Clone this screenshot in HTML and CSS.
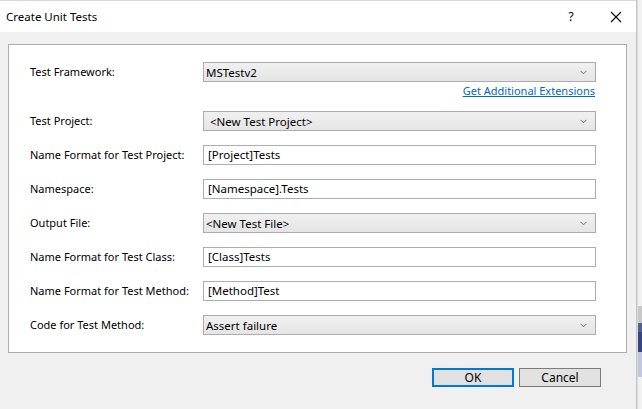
FILE: index.html
```html
<!DOCTYPE html>
<html lang="en">
<head>
  <meta charset="UTF-8" />
  <title>Create Unit Tests</title>
  <link rel="stylesheet" href="styles.css">
</head>
<body>
  <div class="screen">
    <div class="dialog">
      <div class="titlebar">
        <span class="title">Create Unit Tests</span>
        <span class="help">?</span>
        <span class="close">
          <svg width="12" height="12" viewBox="0 0 12 12"><path d="M1 1 L11 11 M11 1 L1 11" stroke="#000" stroke-width="1.1" fill="none"/></svg>
        </span>
      </div>
      <div class="content">
        <div class="panel">
          <div class="row first">
            <label class="label">Test Framework:</label>
            <div class="field">
              <div class="select"><span>MSTestv2</span><svg class="chev" width="7" height="5" viewBox="0 0 7 5"><path d="M0.5 0.8 L3.5 3.8 L6.5 0.8" stroke="#707070" stroke-width="1" fill="none"/></svg></div>
              <a class="link" href="#">Get Additional Extensions</a>
            </div>
          </div>
          <div class="row">
            <label class="label">Test Project:</label>
            <div class="field">
              <div class="select indent"><span>&lt;New Test Project&gt;</span><svg class="chev" width="7" height="5" viewBox="0 0 7 5"><path d="M0.5 0.8 L3.5 3.8 L6.5 0.8" stroke="#707070" stroke-width="1" fill="none"/></svg></div>
            </div>
          </div>
          <div class="row">
            <label class="label">Name Format for Test Project:</label>
            <div class="field"><div class="input">[Project]Tests</div></div>
          </div>
          <div class="row">
            <label class="label">Namespace:</label>
            <div class="field"><div class="input">[Namespace].Tests</div></div>
          </div>
          <div class="row">
            <label class="label">Output File:</label>
            <div class="field">
              <div class="select"><span>&lt;New Test File&gt;</span><svg class="chev" width="7" height="5" viewBox="0 0 7 5"><path d="M0.5 0.8 L3.5 3.8 L6.5 0.8" stroke="#707070" stroke-width="1" fill="none"/></svg></div>
            </div>
          </div>
          <div class="row">
            <label class="label">Name Format for Test Class:</label>
            <div class="field"><div class="input">[Class]Tests</div></div>
          </div>
          <div class="row">
            <label class="label">Name Format for Test Method:</label>
            <div class="field"><div class="input">[Method]Test</div></div>
          </div>
          <div class="row last">
            <label class="label">Code for Test Method:</label>
            <div class="field">
              <div class="select"><span>Assert failure</span><svg class="chev" width="7" height="5" viewBox="0 0 7 5"><path d="M0.5 0.8 L3.5 3.8 L6.5 0.8" stroke="#707070" stroke-width="1" fill="none"/></svg></div>
            </div>
          </div>
        </div>
        <div class="buttons">
          <button class="btn default">OK</button>
          <button class="btn">Cancel</button>
        </div>
      </div>
    </div>
    <div class="behind">
      <div class="b-light"></div>
      <div class="b-scroll"></div>
      <div class="b-blue1"></div>
      <div class="b-blue2"></div>
      <div class="b-lav"></div>
      <div class="b-rest"></div>
    </div>
  </div>
</body>
</html>
```

FILE: styles.css
```css
body {
  margin: 0;
  background: #f0f0f0;
  font-family: "Noto Sans", "Open Sans", sans-serif;
  font-size: 11px;
  color: #000;
}

.screen {
  display: flex;
  width: 642px;
  height: 409px;
  overflow: hidden;
}

.dialog {
  width: 636px;
  height: 409px;
  border-right: 1px solid #c4c4c4;
  background: #f0f0f0;
  display: flex;
  flex-direction: column;
}

.titlebar {
  height: 32px;
  background: #fff;
  border-top: 1px solid #d8d8d8;
  box-sizing: border-box;
  display: flex;
  align-items: center;
  padding-left: 6px;
  font-size: 12px;
}

.title {
  flex: 1;
  font-size: 11.5px;
}

.help {
  width: 40px;
  text-align: center;
  margin-right: 7px;
}

.close {
  width: 36px;
  display: flex;
  justify-content: center;
  margin-right: 2px;
}

.content {
  padding: 12px 9px 0 8px;
}

.panel {
  background: #fff;
  border: 1px solid #adadad;
  padding: 17px 30px 17px 21px;
}

.row {
  display: flex;
  align-items: flex-start;
  margin-bottom: 14px;
}

.row.first {
  margin-bottom: 13px;
}

.row.last {
  margin-bottom: 0;
}

.label {
  width: 173px;
  height: 20px;
  line-height: 20px;
  white-space: nowrap;
}

.field {
  flex: 1;
  display: flex;
  flex-direction: column;
  font-size: 11.5px;
}

.select {
  height: 20px;
  box-sizing: border-box;
  border: 1px solid #acacac;
  background: linear-gradient(#f0f0f0, #e5e5e5);
  display: flex;
  align-items: center;
  justify-content: space-between;
  padding: 0 8px 0 2px;
}

.select.indent {
  padding-left: 6px;
}

.input {
  height: 20px;
  box-sizing: border-box;
  border: 1px solid #abadb3;
  background: #fff;
  line-height: 18px;
  padding-left: 4px;
}

.link {
  align-self: flex-end;
  margin-top: 1px;
  margin-right: 1px;
  line-height: 15px;
  font-size: 11px;
  color: #0066cc;
  text-decoration: underline;
}

.buttons {
  display: flex;
  justify-content: flex-end;
  gap: 5px;
  margin-top: 15px;
  padding-right: 26px;
}

.btn {
  width: 82px;
  height: 19px;
  padding: 0;
  border: 1px solid #7a7a7a;
  background: #e1e1e1;
  font-family: inherit;
  font-size: 12px;
  line-height: 16px;
}

.btn.default {
  border: 1px solid #0078d7;
  box-shadow: inset 0 0 0 1px #0078d7;
}

.behind {
  flex: 1;
  display: flex;
  flex-direction: column;
  border-left: 1px solid #dcdcdc;
}

.b-light { height: 306px; background: #f2f2f2; }
.b-scroll { height: 17px; background: #c8c8c8; }
.b-blue1 { height: 9px; background: #52608f; }
.b-blue2 { height: 20px; background: #36457d; }
.b-lav { height: 25px; background: #c3c6e0; }
.b-rest { flex: 1; background: #f2f2f2; }
```
